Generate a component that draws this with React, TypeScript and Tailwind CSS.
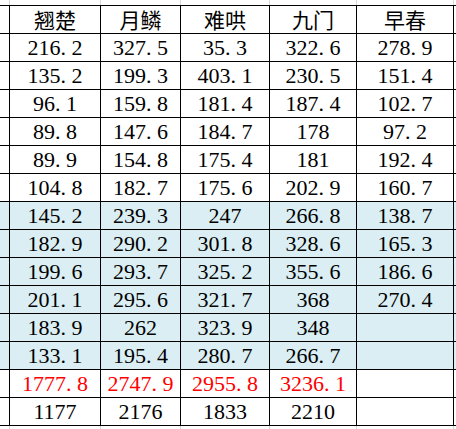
import React from 'react';

const headers = ['翘楚', '月鳞', '难哄', '九门', '早春'];

const rows: string[][] = [
  ['216.2', '327.5', '35.3', '322.6', '278.9'],
  ['135.2', '199.3', '403.1', '230.5', '151.4'],
  ['96.1', '159.8', '181.4', '187.4', '102.7'],
  ['89.8', '147.6', '184.7', '178', '97.2'],
  ['89.9', '154.8', '175.4', '181', '192.4'],
  ['104.8', '182.7', '175.6', '202.9', '160.7'],
  ['145.2', '239.3', '247', '266.8', '138.7'],
  ['182.9', '290.2', '301.8', '328.6', '165.3'],
  ['199.6', '293.7', '325.2', '355.6', '186.6'],
  ['201.1', '295.6', '321.7', '368', '270.4'],
  ['183.9', '262', '323.9', '348', ''],
  ['133.1', '195.4', '280.7', '266.7', ''],
  ['1777.8', '2747.9', '2955.8', '3236.1', ''],
  ['1177', '2176', '1833', '2210', ''],
];

// column widths between the vertical rules at x = 9, 100, 180, 269, 356, 453
const colW = ['w-[91px]', 'w-[80px]', 'w-[89px]', 'w-[87px]', 'w-[97px]'];

const Num = ({ value }: { value: string }) => {
  const [int, dec] = value.split('.');
  return (
    <span>
      {int}
      {dec !== undefined && (
        <>
          <span className="inline-block w-[11px] text-left">.</span>
          {dec}
        </>
      )}
    </span>
  );
};

const Strip = ({ h }: { h: string }) => (
  <div className={`flex ${h}`}>
    <div className="w-[9px]" />
    {colW.map((w, i) => (
      <div key={i} className={`${w} border-l border-[#d9d9d9]`} />
    ))}
    <div className="w-[3px] border-l border-[#d9d9d9]" />
  </div>
);

export default function App() {
  return (
    <div
      className="w-[456px] h-[429px] bg-white overflow-hidden text-black"
      style={{ fontFamily: '"Liberation Serif", "Noto Sans CJK SC", serif' }}
    >
      <Strip h="h-[5px]" />
      <div className="border-b border-black">
        {/* header */}
        <div className="flex h-[28px] border-t border-black">
          <div className="w-[9px]" />
          {headers.map((t, i) => (
            <div
              key={t}
              className={`${colW[i]} border-l border-black flex items-end justify-center pb-[1px] text-[21px] leading-[26px]`}
              style={{ fontFamily: '"Noto Sans CJK SC", sans-serif' }}
            >
              {t}
            </div>
          ))}
          <div className="w-[3px] border-l border-black" />
        </div>
        {rows.map((r, ri) => {
          const blue = ri >= 6 && ri <= 11;
          const red = ri === 12;
          return (
            <div
              key={ri}
              className={`flex h-[28px] border-t border-black ${blue ? 'bg-[#daeef3]' : 'bg-white'} ${red ? 'text-[#ff0000]' : ''}`}
            >
              <div className="w-[9px]" />
              {r.map((v, ci) => (
                <div
                  key={ci}
                  className={`${colW[ci]} border-l border-black flex items-end justify-center text-[22px] leading-[27px]`}
                >
                  <Num value={v} />
                </div>
              ))}
              <div className="w-[3px] border-l border-black" />
            </div>
          );
        })}
      </div>
      <Strip h="h-[3px]" />
    </div>
  );
}
